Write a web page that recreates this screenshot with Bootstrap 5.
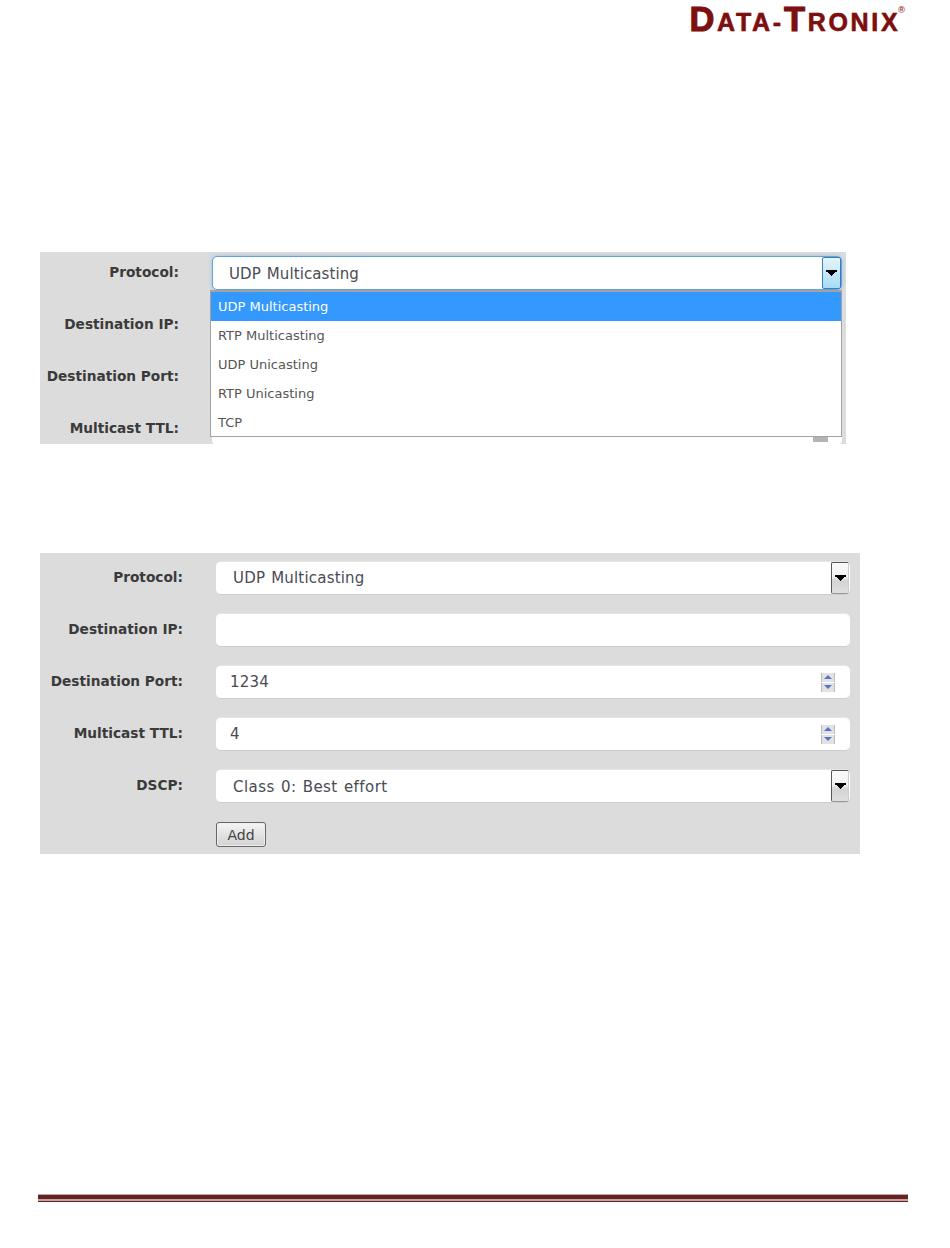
<!DOCTYPE html>
<html lang="en">
<head>
    <meta charset="UTF-8">
    <meta name="viewport" content="width=device-width, initial-scale=1.0">
    <title>Data-Tronix</title>
    <link href="https://cdn.jsdelivr.net/npm/bootstrap@5.3.0/dist/css/bootstrap.min.css" rel="stylesheet">
    <style>
        body { background: #fff; height: 1248px; font-family: "DejaVu Sans", sans-serif; color: #444; }
        .logo-wrap { height: 35px; padding-right: 45px; }
        .logo-text { font-family: "Liberation Sans", sans-serif; font-weight: 700; color: #7d0f10; font-size: 25px; line-height: normal; letter-spacing: 2.7px; text-shadow: 0 0 1px #b06a6a; -webkit-text-stroke: .4px #7d0f10; display: inline-block; }
        .logo-big { font-size: 34.5px; -webkit-text-stroke: .9px #7d0f10; }
        .logo-reg { font-size: 9px; font-weight: 400; vertical-align: 18px; letter-spacing: 0; margin-left: -2px; color: #a54a4a; -webkit-text-stroke: 0; }
        .shot { background: #dcdcdc; margin-left: 40px; }
        .shot-open { width: 806px; height: 192px; margin-top: 217px; padding-top: 4px; overflow: hidden; }
        .shot-full { width: 820px; height: 301px; margin-top: 109px; padding-top: 8px; }
        .form-line { height: 34px; margin-bottom: 18px; gap: 33px; }
        .shot-open .field-label { width: 139px; }
        .shot-full .field-label { width: 143px; }
        .field-label { font-size: 13.7px; font-weight: 700; color: #3a3a3a; text-align: right; margin-top: -1px; flex: none; }
        .field-box { width: 634px; height: 34px; background: #fff; border: 0; border-top: 1px solid #e6e6e6; border-bottom: 1px solid #cdcdcd; border-radius: 5px; padding: 0 0 0 17px; font-size: 15px; letter-spacing: .2px; word-spacing: 1px; line-height: 1; color: #4a4a55; }
        .shot-open .field-box { width: 630px; }
        .field-box.is-focus { border: 1px solid #62a3dc; box-shadow: 0 0 4px #9cc3e2; padding-left: 16px; }
        .field-box.is-focus > span:first-child { padding-top: 2px; letter-spacing: .1px; }
        .field-num { padding-left: 14px; }
        .wide-text { letter-spacing: .45px; padding-top: 2px; }
        .drop-btn { width: 18px; height: 32px; margin-right: 1px; border: 1px solid #555; border-right-color: #ccc; border-bottom-color: #999; border-radius: 2px; background: linear-gradient(#fafafa, #f2f2f2 45%, #d4d4d4 60%, #dedede); flex: none; }
        .is-focus .drop-btn { width: 19px; margin: 0; border: 1px solid #3d7fb5; background: linear-gradient(#e6f5fd, #a8dbf6); }
        .spin { width: 14px; margin-right: 15px; gap: 1px; flex: none; }
        .spin-behind { width: 15px; height: 21px; margin: 8px 14px 0 0; background: #b4b4b8; align-self: flex-start; }
        .spin-part { height: 9px; background: #e2e2e2; border-left: 1px solid #bbb; border-right: 1px solid #bbb; }
        .add-btn { width: 50px; height: 25px; margin: 1px 0 0 176px; padding: 0; font-size: 14px; line-height: 1; color: #444; background: linear-gradient(#f5f5f5, #d2d2d2); border: 1px solid #666; border-radius: 3px; box-shadow: inset 0 0 0 1px #eee; }
        .drop-menu { left: 170px; top: 38px; width: 632px; height: 147px; background: #fff; border: 1px solid #a2a2a2; border-top-width: 2px; font-size: 13px; color: #555; }
        .drop-item { height: 28.8px; padding-left: 7px; padding-top: 2px; }
        .drop-item.is-on { background: #3399ff; color: #fff; padding-top: 0; }
        .foot-rule { margin: auto 42px 46px 38px; height: 8px; background: #c9a3a2; border-top: 1px solid #c9a3a2; border-bottom: 1px solid #622423; position: relative; }
        .foot-rule::before { content: ""; display: block; height: 4px; background: #622423; }
    </style>
</head>
<body class="d-flex flex-column m-0">

    <div class="logo-wrap text-end">
        <span class="logo-text"><span class="logo-big">D</span>ATA-<span class="logo-big">T</span>RONIX<span class="logo-reg">®</span></span>
    </div>

    <div class="shot shot-open position-relative">
        <div class="form-line d-flex align-items-center">
            <div class="field-label">Protocol:</div>
            <div class="field-box is-focus d-flex align-items-center justify-content-between">
                <span>UDP Multicasting</span>
                <span class="drop-btn d-flex align-items-center justify-content-center">
                    <svg width="11" height="6" viewBox="0 0 11 6"><path d="M0 0h11v2H9v1H8v1H7v1H6v1H5V5H4V4H3V3H2V2H0z" fill="#000"/></svg>
                </span>
            </div>
        </div>
        <div class="form-line d-flex align-items-center">
            <div class="field-label">Destination IP:</div>
            <div class="field-box"></div>
        </div>
        <div class="form-line d-flex align-items-center">
            <div class="field-label">Destination Port:</div>
            <div class="field-box"></div>
        </div>
        <div class="form-line d-flex align-items-center">
            <div class="field-label">Multicast TTL:</div>
            <div class="field-box d-flex justify-content-end">
                <span class="spin-behind"></span>
            </div>
        </div>
        <div class="drop-menu position-absolute">
            <div class="drop-item is-on d-flex align-items-center">UDP Multicasting</div>
            <div class="drop-item d-flex align-items-center">RTP Multicasting</div>
            <div class="drop-item d-flex align-items-center">UDP Unicasting</div>
            <div class="drop-item d-flex align-items-center">RTP Unicasting</div>
            <div class="drop-item d-flex align-items-center">TCP</div>
        </div>
    </div>

    <div class="shot shot-full">
        <div class="form-line d-flex align-items-center">
            <div class="field-label">Protocol:</div>
            <div class="field-box d-flex align-items-center justify-content-between">
                <span>UDP Multicasting</span>
                <span class="drop-btn d-flex align-items-center justify-content-center">
                    <svg width="11" height="6" viewBox="0 0 11 6"><path d="M0 0h11v2H9v1H8v1H7v1H6v1H5V5H4V4H3V3H2V2H0z" fill="#000"/></svg>
                </span>
            </div>
        </div>
        <div class="form-line d-flex align-items-center">
            <div class="field-label">Destination IP:</div>
            <div class="field-box"></div>
        </div>
        <div class="form-line d-flex align-items-center">
            <div class="field-label">Destination Port:</div>
            <div class="field-box field-num d-flex align-items-center justify-content-between">
                <span>1234</span>
                <span class="spin d-flex flex-column">
                    <span class="spin-part d-flex align-items-center justify-content-center"><svg width="8" height="4" viewBox="0 0 8 4"><path d="M4 0l4 4H0z" fill="#5a74c8"/></svg></span>
                    <span class="spin-part d-flex align-items-center justify-content-center"><svg width="8" height="4" viewBox="0 0 8 4"><path d="M0 0h8L4 4z" fill="#5a74c8"/></svg></span>
                </span>
            </div>
        </div>
        <div class="form-line d-flex align-items-center">
            <div class="field-label">Multicast TTL:</div>
            <div class="field-box field-num d-flex align-items-center justify-content-between">
                <span>4</span>
                <span class="spin d-flex flex-column">
                    <span class="spin-part d-flex align-items-center justify-content-center"><svg width="8" height="4" viewBox="0 0 8 4"><path d="M4 0l4 4H0z" fill="#5a74c8"/></svg></span>
                    <span class="spin-part d-flex align-items-center justify-content-center"><svg width="8" height="4" viewBox="0 0 8 4"><path d="M0 0h8L4 4z" fill="#5a74c8"/></svg></span>
                </span>
            </div>
        </div>
        <div class="form-line d-flex align-items-center">
            <div class="field-label">DSCP:</div>
            <div class="field-box d-flex align-items-center justify-content-between">
                <span class="wide-text">Class 0: Best effort</span>
                <span class="drop-btn d-flex align-items-center justify-content-center">
                    <svg width="11" height="6" viewBox="0 0 11 6"><path d="M0 0h11v2H9v1H8v1H7v1H6v1H5V5H4V4H3V3H2V2H0z" fill="#000"/></svg>
                </span>
            </div>
        </div>
        <button type="button" class="add-btn">Add</button>
    </div>

    <div class="foot-rule"></div>

    <script src="https://cdn.jsdelivr.net/npm/bootstrap@5.3.0/dist/js/bootstrap.bundle.min.js"></script>
</body>
</html>
